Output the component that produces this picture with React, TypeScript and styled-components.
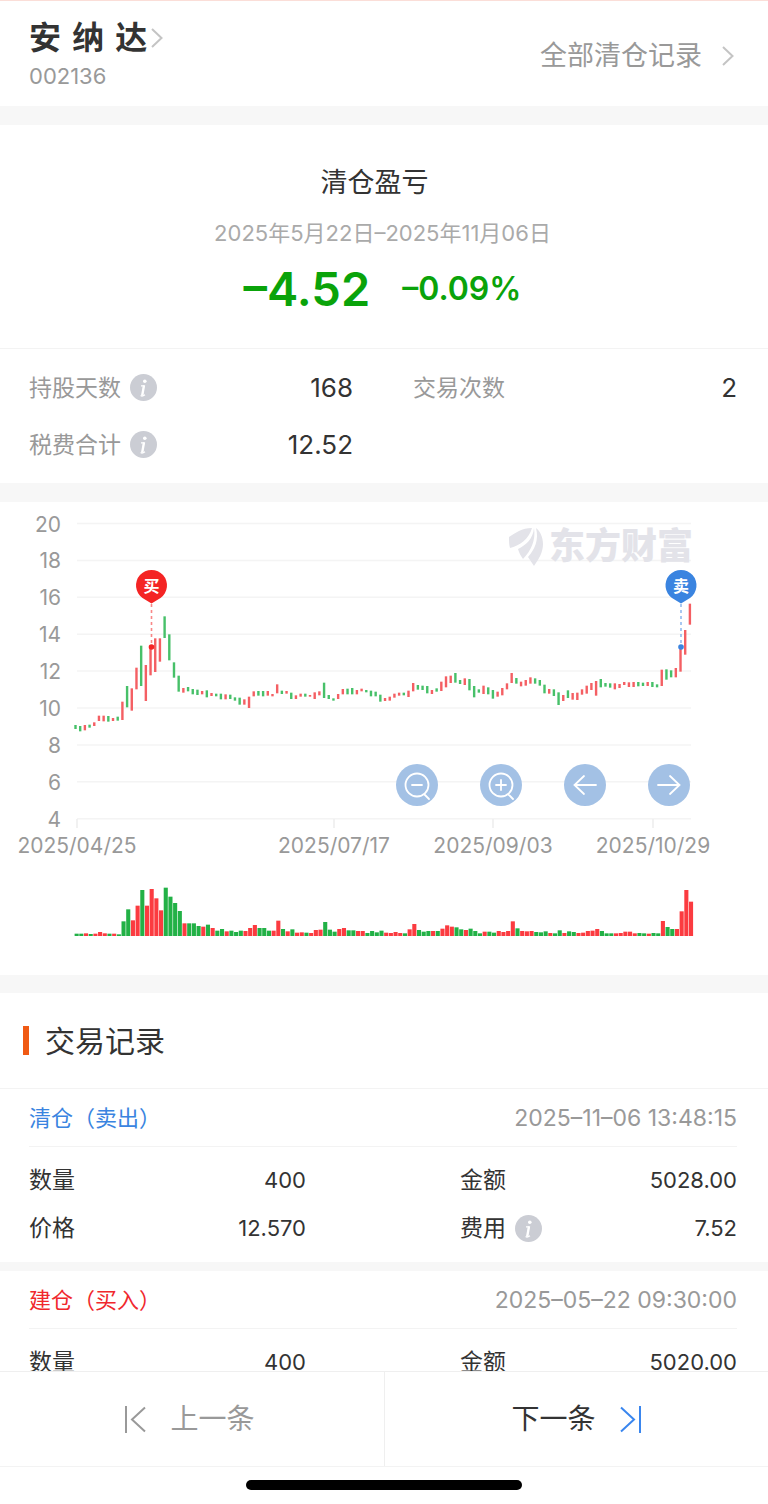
import React from 'react';
import styled, { createGlobalStyle } from 'styled-components';

const GlobalStyle = createGlobalStyle`
  * { box-sizing: border-box; }
  body {
    margin: 0;
    background: #fff;
    color: #333;
    font-family: Inter, "Noto Sans CJK SC", sans-serif;
    font-size: 23px;
    line-height: 32px;
  }
  button {
    border: 0;
    padding: 0;
    background: none;
    font: inherit;
    color: inherit;
    cursor: pointer;
  }
  a { color: inherit; text-decoration: none; }
  dl, dd, dt, h1, h2, h3, p { margin: 0; font-weight: 400; }
`;

const Page = styled.div`
  display: flex;
  flex-direction: column;
  height: 100vh;
  border-top: 1px solid #fbded8;
`;

const Content = styled.main`
  flex: 1;
  min-height: 0;
  overflow-y: auto;
  scrollbar-width: none;
`;

const Band = styled.div<{ $size: number }>`
  height: ${(p) => p.$size}px;
  background: #f7f7f7;
`;

const Header = styled.header`
  display: flex;
  justify-content: space-between;
  align-items: center;
  padding: 17px 34px 12px 29px;
`;

const StockName = styled.h1`
  display: flex;
  align-items: center;
  gap: 4px;
  font-family: "DejaVu Sans", "Noto Sans CJK SC", sans-serif;
  font-size: 32px;
  line-height: 40px;
  font-weight: 700;
  white-space: pre;
`;

const StockCode = styled.p`
  color: #999;
  font-size: 22px;
  line-height: 36px;
`;

const AllRecords = styled.a`
  display: flex;
  align-items: center;
  gap: 20px;
  color: #999;
  font-size: 27px;
  line-height: 40px;
`;

const Summary = styled.section`
  padding: 38px 3px 31px 0;
  border-bottom: 1px solid #f3f3f3;
  text-align: center;
`;

const SummaryTitle = styled.h2`
  padding-right: 16px;
  font-size: 27px;
  line-height: 40px;
`;

const SummaryDates = styled.p`
  margin-top: 10px;
  color: #aaa;
  font-size: 22px;
  line-height: 40px;
`;

const Profit = styled.p`
  display: flex;
  justify-content: center;
  align-items: center;
  gap: 32px;
  margin-top: 8px;
  color: #0aa30a;
  font-weight: 600;
  line-height: 56px;
`;

const ProfitAmount = styled.span`
  font-size: 47px;
`;

const ProfitRate = styled.span`
  font-size: 32px;
`;

const StatGrid = styled.dl`
  display: grid;
  grid-template-columns: 1fr 1fr;
  column-gap: 60px;
  padding: 10px 31px 10px 29px;
`;

const RecordGrid = styled.dl`
  display: grid;
  grid-template-columns: 1fr 1fr;
  column-gap: 154px;
  padding: 9px 31px 10px 29px;
`;

const Pair = styled.div<{ $height: number; $muted?: boolean; $valueSize: number }>`
  display: flex;
  align-items: center;
  justify-content: space-between;
  height: ${(p) => p.$height}px;

  dt {
    display: flex;
    align-items: center;
    gap: 9px;
    color: ${(p) => (p.$muted ? '#999' : '#333')};
  }
  dd { font-size: ${(p) => p.$valueSize}px; }
`;

const InfoButton = styled.button`
  display: flex;
`;

const ChartSection = styled.section`
  position: relative;
  svg { display: block; }
`;

const ChartTools = styled.div`
  position: absolute;
  top: 262px;
  right: 78px;
  display: flex;
  gap: 42px;
`;

const ToolButton = styled.button`
  display: flex;
  width: 42px;
  height: 42px;
  border-radius: 50%;
  background: #a3c1e5;
`;

const SectionTitle = styled.h2`
  display: flex;
  align-items: center;
  gap: 16px;
  height: 96px;
  padding-left: 23px;
  border-bottom: 1px solid #f3f3f3;
  font-size: 30px;

  &::before {
    content: "";
    width: 6px;
    height: 29px;
    background: #f05a14;
  }
`;

const RecordHead = styled.div`
  display: flex;
  align-items: center;
  justify-content: space-between;
  height: 58px;
  margin: 0 31px 0 29px;
  border-bottom: 1px solid #f3f3f3;
`;

const RecordKind = styled.h3<{ $side: 'buy' | 'sell' }>`
  color: ${(p) => (p.$side === 'buy' ? '#f0282d' : '#3a84e0')};
  font-size: 22px;
`;

const RecordTime = styled.time`
  color: #999;
  font-size: 23px;
`;

const Footer = styled.nav`
  display: grid;
  grid-template-columns: 1fr 1fr;
  height: 96px;
  border-top: 1px solid #efefef;
  border-bottom: 1px solid #f3f3f3;
`;

const PageButton = styled.button<{ $enabled?: boolean }>`
  display: flex;
  align-items: center;
  justify-content: center;
  gap: 24px;
  padding-right: ${(p) => (p.$enabled ? 0 : 5)}px;
  color: ${(p) => (p.$enabled ? '#333' : '#999')};
  font-size: 28px;

  & + & { border-left: 1px solid #efefef; }
`;

const HomeArea = styled.div`
  display: flex;
  justify-content: center;
  padding: 13px 0 14px;
`;

const HomeIndicator = styled.div`
  width: 36%;
  height: 10px;
  border-radius: 5px;
  background: #000;
`;

/* Daily price ranges: colour, then high and low in thirds of a unit below the 18 line. */
const CANDLES =
  'g495-507 g498-514 r495-511 g494-503 r487-498 r467-483 r467-484 g468-485 r474-483 g470-482 r425-480 ' +
  'g378-442 r385-452 r323-388 g257-378 r315-423 r260-346 r235-336 r235-305 g169-234 g223-301 g307-353 ' +
  'g347-395 r384-398 g381-394 g387-403 g389-405 r393-403 g391-412 r399-408 g401-409 g401-418 r403-418 ' +
  'g404-417 g412-422 g413-434 r418-434 r410-444 r394-409 g393-407 g393-409 r393-407 r402-409 r373-400 ' +
  'g392-402 r393-401 g398-417 r406-417 r401-410 g401-410 r405-410 r397-417 r394-406 g368-414 g405-417 ' +
  'g415-422 r402-417 r387-403 g386-403 g384-403 r390-403 r386-394 g390-397 g392-409 g395-409 g404-425 ' +
  'r414-423 r410-422 r401-413 r398-407 g398-406 r392-411 r369-394 g375-389 g377-390 g378-400 r390-402 ' +
  'g385-395 r365-393 r349-382 r347-369 g339-368 g360-372 r355-375 g357-391 g378-412 g388-398 r377-402 ' +
  'g382-403 g390-416 r395-410 r384-406 r370-388 r339-369 g354-371 r365-379 r360-377 r352-371 g355-371 ' +
  'g360-377 g374-400 r387-401 g388-408 g397-435 r405-423 g391-414 r399-419 r398-420 r388-404 r377-401 ' +
  'r369-390 r363-407 g357-382 g369-380 g370-383 r370-388 r372-384 r366-375 r367-381 r366-381 g366-379 ' +
  'g368-378 r366-378 g366-381 g373-382 r329-378 g328-359 g331-352 r324-352 r267-335 r210-284 r131-194';

/* Daily volumes: colour, then bar height in thirds of a unit. */
const VOLUMES =
  'g7 g7 r8 g6 r7 r12 r8 g7 r7 g5 g44 g80 r47 r91 g138 r91 r141 r113 r77 g145 g118 g99 g75 r38 g38 g38 g30 r28 ' +
  'g34 r24 g16 g21 r14 g16 g12 g16 r15 r24 r33 g24 g24 g16 r16 r46 g21 r14 g20 r10 r11 g10 r9 r18 r19 g42 g19 ' +
  'g13 r21 r24 g17 g17 r15 r15 g9 g15 g11 g16 r10 r9 r12 r9 g8 r20 r36 g18 g13 g15 r15 g15 r22 r32 r28 g26 g20 ' +
  'r18 g22 g15 g8 r13 g13 g10 r15 r12 r15 r44 g23 r15 r14 r15 g12 g11 g14 r9 g8 g17 r9 g14 g12 r9 r10 r15 r16 ' +
  'r21 g15 g8 g8 r8 r9 r13 r13 r8 g9 g8 r7 g9 g8 r45 g27 g21 r21 r74 r138 r103';

const LEVELS = [20, 18, 16, 14, 12, 10, 8, 6, 4];
const DATES: [string, number][] = [
  ['2025/04/25', 77],
  ['2025/07/17', 334],
  ['2025/09/03', 493],
  ['2025/10/29', 653],
];
const STEP = 4.69;
const levelY = (level: number) => 21.5 + (20 - level) * 18.45;

function Pin({ x, color, label }: { x: number; color: string; label: string }) {
  return (
    <g>
      <path d={`M${x} 102V144`} stroke={color} strokeOpacity="0.55" strokeWidth="1.6" strokeDasharray="3 3" />
      <circle cx={x} cy="145" r="2.8" fill={color} />
      <path d={`M${x} 101.5L${x - 9} 96A15.5 15.5 0 1 1 ${x + 9} 96Z`} fill={color} />
      <text x={x} y="90" textAnchor="middle" fontSize="16" fontWeight="700" fill="#fff">{label}</text>
    </g>
  );
}

function PriceChart() {
  return (
    <svg width="100%" viewBox="0 0 768 473" role="img" aria-label="股价走势" fill="none">
      {LEVELS.map((level) => (
        <g key={level}>
          <path d={`M77 ${levelY(level)}H691`} stroke="#f4f4f4" strokeWidth="1.5" />
          <text x="61" y={levelY(level) + 8} textAnchor="end" fontSize="21" fill="#999">{level}</text>
        </g>
      ))}
      {DATES.map(([date, x]) => (
        <g key={date}>
          <path d={`M${x} 317V326`} stroke="#ececec" strokeWidth="1.5" />
          <text x={x} y="351" textAnchor="middle" fontSize="21" fill="#999">{date}</text>
        </g>
      ))}
      <g fill="#e3e3e9">
        <path d="M532 26C522 26 515 31 509 35C509 39 509 43 510 46C519 44 529 37 532 26Z" />
        <path d="M534 26C533 37 526 43 518 47C519 51 521 54 523 57C531 49 536 38 534 26Z" />
        <path d="M536 26C539 38 535 47 528 55C530 58 532 61 534 64C539 57 543 50 543 42C543 35 540 29 536 26Z" />
        <text x="549" y="57" fontSize="36" fontWeight="900">东方财富</text>
      </g>
      {CANDLES.split(' ').map((item, i) => {
        const [high, low] = item.slice(1).split('-').map(Number);
        return (
          <rect
            key={i}
            x={74.3 + i * STEP}
            y={58 + high / 3}
            width="2.4"
            height={(low - high) / 3}
            fill={item[0] === 'r' ? '#f45f63' : '#47c069'}
          />
        );
      })}
      {VOLUMES.split(' ').map((item, i) => {
        const size = Number(item.slice(1)) / 3;
        return (
          <rect
            key={i}
            x={74.6 + i * STEP}
            y={434 - size}
            width="4.1"
            height={size}
            fill={item[0] === 'r' ? '#fb3b40' : '#22b146'}
          />
        );
      })}
      <Pin x={151.5} color="#f42424" label="买" />
      <Pin x={681} color="#3a84e0" label="卖" />
    </svg>
  );
}

const TOOLS: [string, string][] = [
  ['缩小', 'M32.5 21A11.5 11.5 0 1 1 9.5 21A11.5 11.5 0 1 1 32.5 21M28 30L33 35M16 21H26'],
  ['放大', 'M32.5 21A11.5 11.5 0 1 1 9.5 21A11.5 11.5 0 1 1 32.5 21M28 30L33 35M16 21H26M21 16V26'],
  ['向左', 'M32 21H10.5M20 12L10.5 21L20 30'],
  ['向右', 'M10 21H31.5M22 12L31.5 21L22 30'],
];

function Chevron() {
  return (
    <svg width="12" height="20" viewBox="0 0 12 20" fill="none" stroke="#c4c4c4" strokeWidth="2">
      <path d="M1 1L10.5 10L1 19" />
    </svg>
  );
}

function Info({ topic }: { topic: string }) {
  return (
    <InfoButton type="button" aria-label={`${topic}说明`}>
      <svg width="27" height="27" viewBox="0 0 27 27" fill="none" stroke="#fff">
        <circle cx="13.5" cy="13.5" r="13.5" fill="#cbcdd4" stroke="none" />
        <circle cx="14.8" cy="7.2" r="1.8" fill="#fff" stroke="none" />
        <path d="M11 11.8H14.6M10.6 21.6C11.6 22.3 13.4 22 15 20.8" strokeWidth="1.2" />
        <path d="M14 11.4L12.2 21.6" strokeWidth="2.4" />
      </svg>
    </InfoButton>
  );
}

type Entry = { label: string; value: string; info?: boolean };

const STATS: Entry[] = [
  { label: '持股天数', value: '168', info: true },
  { label: '交易次数', value: '2' },
  { label: '税费合计', value: '12.52', info: true },
];

const RECORDS: { side: 'buy' | 'sell'; kind: string; time: string; entries: Entry[] }[] = [
  {
    side: 'sell',
    kind: '清仓（卖出）',
    time: '2025–11–06 13:48:15',
    entries: [
      { label: '数量', value: '400' },
      { label: '金额', value: '5028.00' },
      { label: '价格', value: '12.570' },
      { label: '费用', value: '7.52', info: true },
    ],
  },
  {
    side: 'buy',
    kind: '建仓（买入）',
    time: '2025–05–22 09:30:00',
    entries: [
      { label: '数量', value: '400' },
      { label: '金额', value: '5020.00' },
    ],
  },
];

export default function App() {
  return (
    <>
      <GlobalStyle />
      <Page>
        <Content>
          <Header>
            <div>
              <StockName>安 纳 达<Chevron /></StockName>
              <StockCode>002136</StockCode>
            </div>
            <AllRecords href="#records">全部清仓记录<Chevron /></AllRecords>
          </Header>
          <Band $size={19} />
          <Summary>
            <SummaryTitle>清仓盈亏</SummaryTitle>
            <SummaryDates>2025年5月22日–2025年11月06日</SummaryDates>
            <Profit>
              <ProfitAmount>–4.52</ProfitAmount>
              <ProfitRate>–0.09%</ProfitRate>
            </Profit>
          </Summary>
          <StatGrid>
            {STATS.map((s) => (
              <Pair key={s.label} $height={57} $muted $valueSize={26}>
                <dt>{s.label}{s.info && <Info topic={s.label} />}</dt>
                <dd>{s.value}</dd>
              </Pair>
            ))}
          </StatGrid>
          <Band $size={19} />
          <ChartSection>
            <PriceChart />
            <ChartTools>
              {TOOLS.map(([label, d]) => (
                <ToolButton key={label} type="button" aria-label={label}>
                  <svg width="42" height="42" viewBox="0 0 42 42" fill="none" stroke="#fff" strokeWidth="1.8" strokeLinecap="round">
                    <path d={d} />
                  </svg>
                </ToolButton>
              ))}
            </ChartTools>
          </ChartSection>
          <Band $size={18} />
          <SectionTitle id="records">交易记录</SectionTitle>
          {RECORDS.map((r, i) => (
            <React.Fragment key={r.time}>
              {i > 0 && <Band $size={9} />}
              <article>
                <RecordHead>
                  <RecordKind $side={r.side}>{r.kind}</RecordKind>
                  <RecordTime>{r.time}</RecordTime>
                </RecordHead>
                <RecordGrid>
                  {r.entries.map((e) => (
                    <Pair key={e.label} $height={48} $valueSize={22}>
                      <dt>{e.label}{e.info && <Info topic={e.label} />}</dt>
                      <dd>{e.value}</dd>
                    </Pair>
                  ))}
                </RecordGrid>
              </article>
            </React.Fragment>
          ))}
        </Content>
        <Footer>
          <PageButton type="button">
            <svg width="22" height="27" viewBox="0 0 22 27" fill="none" stroke="#999" strokeWidth="2">
              <path d="M2 0V27M21 1.5L8 13.5L21 25.5" />
            </svg>
            上一条
          </PageButton>
          <PageButton type="button" $enabled>
            下一条
            <svg width="22" height="27" viewBox="0 0 22 27" fill="none" stroke="#3a86ee" strokeWidth="2">
              <path d="M20 0V27M1 1.5L14 13.5L1 25.5" />
            </svg>
          </PageButton>
        </Footer>
        <HomeArea>
          <HomeIndicator />
        </HomeArea>
      </Page>
    </>
  );
}
